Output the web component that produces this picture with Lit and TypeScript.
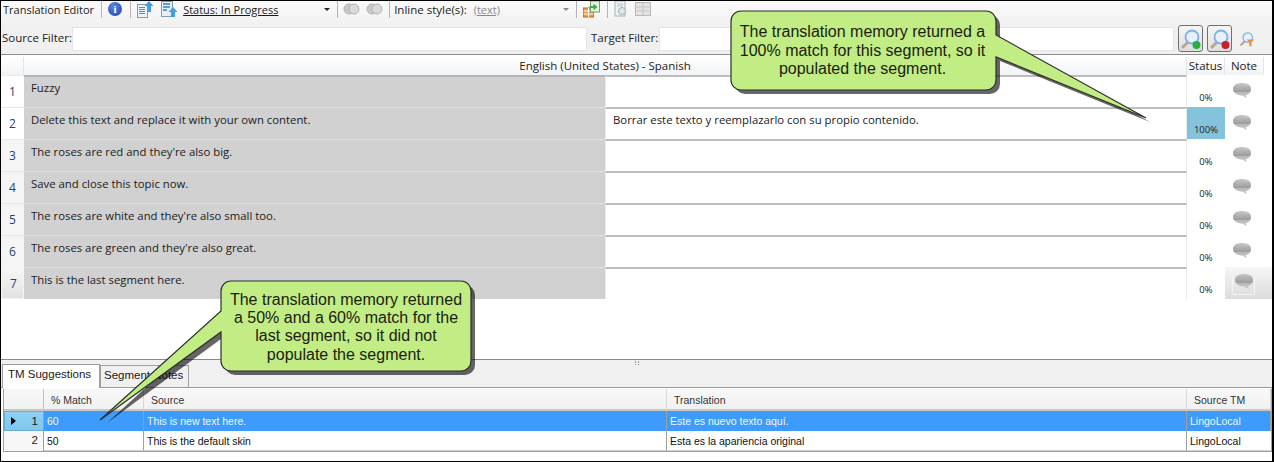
import { LitElement, html, css, svg } from "lit";
import { customElement } from "lit/decorators.js";

const SRC = ["Fuzzy","Delete this text and replace it with your own content.","The roses are red and they're also big.","Save and close this topic now.","The roses are white and they're also small too.","The roses are green and they're also great.","This is the last segment here."];

const sep = html`<span class="sep"></span>`;
const bubble = html`<svg class="bubble" width="20" height="18" viewBox="0 0 20 18"><defs><linearGradient id="bg" x1="0" y1="0" x2="0" y2="1"><stop offset="0" stop-color="#c9c9c9"/><stop offset=".42" stop-color="#a6a6a6"/><stop offset=".55" stop-color="#9e9e9e"/><stop offset=".6" stop-color="#b8b8b8"/><stop offset="1" stop-color="#cfcfcf"/></linearGradient></defs><path d="M10 1C15.500 1 19 3 19 7S15.500 13 13.500 13L15 16.500 10.500 13.500C5 13.500 1 11 1 7S4.500 1 10 1Z" fill="url(#bg)"/></svg>`;
const magnifier = (c: string, size = 22) => html`<svg class="ico" width="${size}" height="${size}" viewBox="0 0 22 22"><path d="M3 19l6-6" stroke="#b5a68e" stroke-width="3" stroke-linecap="round"/><circle cx="12" cy="9" r="6.500" fill="#e6f1fb" stroke="#7fb0e4" stroke-width="1.800"/>${c?svg`<circle cx="16.500" cy="17" r="4" fill="${c}"/>`:""}</svg>`;

@customElement("app-root")
export class AppRoot extends LitElement {
  static styles = css`
    :host{display:block;position:relative;width:1274px;height:462px;box-sizing:border-box;border:solid #000;border-width:1px 2px 1px 1px;background:#fff;overflow:hidden;font-family:"Open Sans","Noto Sans",sans-serif;font-size:11px;color:#1b1b1b}
    *{box-sizing:border-box}
    .bar{height:25px;display:flex;align-items:center;gap:6px;padding:0 0 9px 2px;background:linear-gradient(#fbfbfb,#f0f0f0);font-size:11px;white-space:nowrap}
    .sep{width:1px;height:17px;background:#b4b4b4;flex:none}
    .title{margin-right:1px}
    .info{width:14px;height:14px;border-radius:50%;background:radial-gradient(circle at 40% 30%,#5b86e6,#1c3fae);color:#fff;font:bold 11px "Liberation Serif",serif;display:flex;align-items:center;justify-content:center;margin-right:2px;flex:none}
    .status{width:148px;display:flex;justify-content:space-between;align-items:center;margin-left:-1px}
    .tri{width:0;height:0;border:solid transparent;border-width:3px 3px 0;border-top-color:#222;margin-right:1px}
    .tri.off{border-top-color:#888}
    .lab{font-size:11.500px;margin-left:-2px}
    .inline{width:97px;display:flex;justify-content:space-between;align-items:center;padding-left:1px;color:#888}
    .ml{margin-left:-1px}
    .ico{display:block;flex:none}
    .filters{height:29px;display:flex;align-items:flex-start;background:#f0f0f0;border-bottom:1px solid #8f8f8f;padding-top:1px;font-size:11.500px;color:#222}
    .filters .lb{padding:3px 0 0 1px;width:71px}
    .filters .ta{padding:3px 0 0 4px;width:72px}
    .inp{height:24px;background:#fff;border:1px solid #e2e4e8;border-radius:1px;flex:none}
    .i1{width:515px}
    .i2{width:515px}
    .sb{width:25px;height:27px;border:1px solid #707070;border-radius:3px;background:linear-gradient(#f6f6f6,#dedede);display:flex;align-items:center;justify-content:center;margin:-2px 0 0 4px}
    .plain{margin:4px 0 0 7px;position:relative}
    .funnel{position:absolute;left:7px;top:7px}
    .grid{display:grid;grid-template-columns:23px 581px 582px 38px 47px;padding-top:2px;width:1271px}
    .hd{height:18px;background:linear-gradient(#fff,#f1f3f5);border-right:1px solid #e3e5e8;text-align:center;line-height:18px;color:#222;font-size:11.500px}
    .hn{margin-right:8px}
    .rh{height:32px;border-top:1px solid #e9e9e9;background:#f5f5f5;color:#25407c;font-size:12px;padding:7px 0 0 8px}
    .rh.wh{background:#fff}
    .rh.sel{background:linear-gradient(#f7f7f7,#e2e2e2);border:1px solid #f4f4f4}
    .s{height:32px;background:#d1d1d1;border-top:1px solid #e0e0e4;padding:4px 0 0 7px;font-size:11.350px}
    .s.first{border-top:2px solid #b4b4b8;padding-top:3px}
    .t{height:32px;border-top:2px solid #bdbdc1;border-left:1px solid #e7e9ec;border-right:1px solid #e7e9ec;padding:3px 0 0 7px;font-size:11.350px}
    .st{height:32px;text-align:center;padding-top:17px;font-size:9.500px;line-height:12px;color:#222}
    .st.full{background:#85c2dc}
    .nt{height:32px;display:flex;padding:7px 0 0 7px}
    .nt.sel{background:linear-gradient(#f6f6f6,#dcdcdc);padding-top:4px}
    .nt span{display:block}
    .nt.sel span{width:23px;height:24px;padding:1px 0 0 1px;border:1px solid #f3f3f3;border-radius:2px}
    .bubble{display:block}
    .lower{position:absolute;left:0;right:0;top:358px;bottom:0;border-top:1px solid #8a8a8a;background:#f0f0f0}
    .grip{position:absolute;left:634px;top:1px;width:4px;height:4px;border-left:1px dotted #999;border-right:1px dotted #999}
    .tabs{display:flex;align-items:flex-end;height:28px;padding-left:1px;border-bottom:1px solid #9a9a9a}
    .tab{height:22px;border:1px solid #a0a0a0;border-bottom:0;background:#f0f0f0;padding:1px 4px;font-family:"Liberation Sans",sans-serif;font-size:11.500px;white-space:nowrap}
    .tab.on{height:24px;background:#fff;margin-bottom:-1px;padding:3px 5px;width:98px}
    .tab.off{width:89px;padding-left:3px;padding-top:3px}
    .wrap{background:#fff;height:73px}
    .dg{margin-left:2px;background:#fff;border:1px solid #a0a0a0;border-top:1px solid #fff;height:64px;font-family:"Liberation Sans",sans-serif;font-size:10.500px;display:grid;grid-template-columns:40px 100px 523px 520px 1fr;grid-template-rows:22px 20px 20px}
    .dh{background:linear-gradient(#f8f8f8,#f1f1f1);border-right:1px solid #d8d8d8;border-bottom:2px solid #c8c8c8;padding:5px 7px;color:#333}
    .dh:first-child{border-right:1px solid #c0c0c0}
    .c{border-right:1px solid #9e9e9e;border-bottom:1px solid #d0d0d0;padding:4px 0 0 3px;white-space:nowrap;color:#111}
    .c.a{background:#3d9bfb;color:#f2f6fb;border-bottom-color:#3d9bfb}
    .c:last-child{border-right:0}
    .rn{text-align:right;padding:3px 5px 0 0;border-right:1px solid #9e9e9e;font-size:11.500px;position:relative;background:#f7f7f7}
    .rn.a{background:linear-gradient(#8fd0f4,#7dc7ef);border:1px solid #6aaccb}
    .rn.a::before{content:"";position:absolute;left:6px;top:5px;border:solid transparent;border-width:4px 0 4px 5px;border-left-color:#000}
    .call{position:absolute;left:0;top:0;pointer-events:none}
    .ct{position:absolute;text-align:center;font-family:"Liberation Sans",sans-serif;font-size:16px;color:#1c1c0e;white-space:nowrap}
    .ct.a{left:729px;top:22px;width:265px;line-height:18.500px}
    .ct.b{left:220px;top:290px;width:250px;line-height:18.200px}
  `;
  render() {
    return html`
      <div class="bar">
        <span class="title">Translation Editor</span>${sep}
        <span class="info">i</span>${sep}
        <svg class="ico" style="margin-left:-1px" width="18" height="18" viewBox="0 0 18 18"><rect x="1.500" y="4.500" width="10" height="13" fill="#eaf3fb" stroke="#7f9db0"/><path d="M3 7.500h6M3 9.500h6M3 11.500h6M3 13.500h6" stroke="#4f8fc4"/><path d="M13 1l4.500 5H15v6h-3.500V6H8.500z" fill="#3fa0e0"/></svg>
        <svg class="ico" width="18" height="18" viewBox="0 0 18 18"><rect x="1.500" y="1.500" width="11" height="15" fill="#e4eef7" stroke="#7f9db0"/><path d="M3 4h7M3 7h7M3 10h4" stroke="#3d7fb8" stroke-width="1.500"/><path d="M13 7l4.500 5H15v5h-4v-5H8.500z" fill="#3fa0e0"/></svg>
        <span class="status"><u>Status: In Progress</u><i class="tri"></i></span>${sep}
        <svg class="ico ml" width="40" height="12" viewBox="0 0 40 12"><g stroke="#b4b4b4"><circle cx="6" cy="6" r="5" fill="#c8c8c8"/><circle cx="11" cy="6" r="5" fill="#dadada"/><circle cx="29" cy="6" r="5" fill="#c8c8c8"/><circle cx="34" cy="6" r="5" fill="#dadada"/></g></svg>${sep}
        <span class="lab">Inline style(s):</span>
        <span class="inline"><u>(text)</u><i class="tri off"></i></span>${sep}
        <svg class="ico ml" width="19" height="18" viewBox="0 0 18 18"><rect x="1" y="8" width="10" height="9" fill="#ee9a3a" stroke="#c96d1a"/><path d="M1 11h10M1 14h10M6 8v9" stroke="#fff"/><rect x="8" y="1" width="9" height="11" fill="#e9f3e4" stroke="#7c9a6a"/><path d="M7 6h4V3.500L15 7l-4 3.500V8H7z" fill="#35b04a"/></svg>${sep}
        <svg class="ico ml" width="16" height="18" viewBox="0 0 16 18"><rect x="2" y="1" width="10" height="15" fill="#edf1f3" stroke="#a6b3ba"/><path d="M4 4h6M4 6h6" stroke="#b7c4cc"/><circle cx="9" cy="11" r="3.500" fill="#dfe6ea" stroke="#9fb1bb"/></svg>
        <svg class="ico" width="16" height="14" viewBox="0 0 16 14"><rect x=".5" y=".5" width="15" height="13" fill="#e4e4e4" stroke="#b9b9b9"/><path d="M.5 5h15M.5 9h15M8 .5v13" stroke="#c4c4c4"/></svg>
      </div>
      <div class="filters">
        <span class="lb">Source Filter:</span><span class="inp i1"></span>
        <span class="ta">Target Filter:</span><span class="inp i2"></span>
        <span class="sb">${magnifier("#27b03d")}</span>
        <span class="sb">${magnifier("#c8202a")}</span>
        <span class="plain">${magnifier("", 16)}<svg class="funnel" width="9" height="9" viewBox="0 0 12 12"><path d="M1 2h10L7.500 6v5h-3V6z" fill="#e8923c"/></svg></span>
      </div>
      <div class="grid">
        <div class="hd"></div><div class="hd" style="grid-column:span 2">English (United States) - Spanish</div><div class="hd">Status</div><div class="hd hn">Note</div>
        ${SRC.map((s, i) => html`
          <div class="rh ${i===6?"sel":i===0||i===1?"wh":""}">${i+1}</div>
          <div class="s ${i===0?"first":""}">${s}</div>
          <div class="t">${i===1?"Borrar este texto y reemplazarlo con su propio contenido.":""}</div>
          <div class="st ${i===1?"full":""}">${i===1?"100%":"0%"}</div>
          <div class="nt ${i===6?"sel":""}"><span>${bubble}</span></div>`)}
      </div>
      <div class="lower">
        <span class="grip"></span>
        <div class="tabs"><span class="tab on">TM Suggestions</span><span class="tab off">Segment Notes</span></div>
        <div class="wrap"><div class="dg">
          <div class="dh"></div><div class="dh">% Match</div><div class="dh">Source</div><div class="dh">Translation</div><div class="dh">Source TM</div>
          <div class="rn a">1</div><div class="c a">60</div><div class="c a">This is new text here.</div><div class="c a">Este es nuevo texto aquí.</div><div class="c a">LingoLocal</div>
          <div class="rn">2</div><div class="c">50</div><div class="c">This is the default skin</div><div class="c">Esta es la apariencia original</div><div class="c">LingoLocal</div>
        </div></div>
      </div>
      <svg class="call" width="1271" height="460">
        <path transform="translate(-1 -1)" d="M745 15H990a10 10 0 0 1 10 10V39L1150 122 1000 61V84a10 10 0 0 1-10 10H745a10 10 0 0 1-10-10V25a10 10 0 0 1 10-10Z" fill="#000" opacity=".6"/>
        <path transform="translate(-1 -1)" d="M741 11H986a10 10 0 0 1 10 10V35L1146 118 996 57V80a10 10 0 0 1-10 10H741a10 10 0 0 1-10-10V21a10 10 0 0 1 10-10Z" fill="#c1ed84" stroke="#2e2e2e" stroke-width="1.200"/>
        <path transform="translate(-1 -1)" d="M235 285H465a10 10 0 0 1 10 10V365a10 10 0 0 1-10 10H235a10 10 0 0 1-10-10V336L107 423 225 315V295a10 10 0 0 1 10-10Z" fill="#000" opacity=".6"/>
        <path transform="translate(-1 -1)" d="M231 281H461a10 10 0 0 1 10 10V361a10 10 0 0 1-10 10H231a10 10 0 0 1-10-10V332L100 420 221 311V291a10 10 0 0 1 10-10Z" fill="#c1ed84" stroke="#2e2e2e" stroke-width="1.200"/>
      </svg>
      <div class="ct a">The translation memory returned a<br>100% match for this segment, so it<br>populated the segment.</div>
      <div class="ct b">The translation memory returned<br>a 50% and a 60% match for the<br>last segment, so it did not<br>populate the segment.</div>
    `;
  }
}
